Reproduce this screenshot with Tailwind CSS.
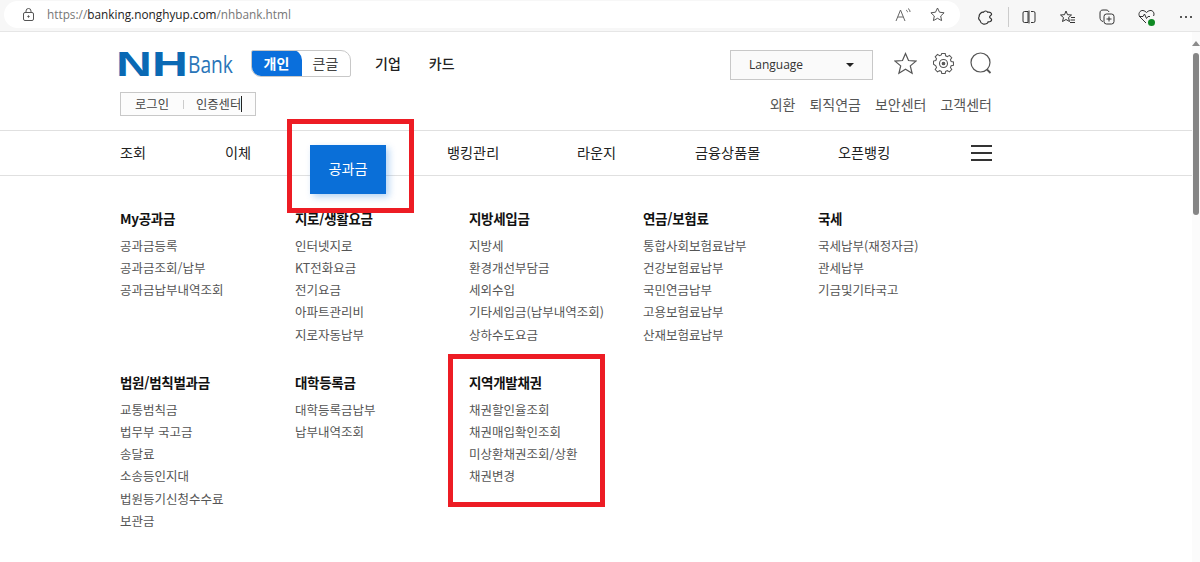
<!DOCTYPE html>
<html lang="ko"><head><meta charset="utf-8"><script src="https://cdn.jsdelivr.net/npm/@tailwindcss/browser@4"></script></head>
<body class="relative h-[562px] w-[1200px] overflow-hidden bg-white font-['Noto_Sans_CJK_KR','Noto_Sans',sans-serif] text-[#333]">
<!-- browser bar -->
<div class="flex h-[32px] items-start border-b border-[#e6e6e6] bg-[#f7f7f7] pl-[4px]">
  <div class="mt-[1px] flex h-[27px] w-[956px] shrink-0 items-center rounded-full bg-white pl-[18px] pr-[15px]">
    <svg class="h-[13px] w-[13px]" viewBox="0 0 13 13" fill="none" stroke="#555" stroke-width="1"><rect x="1.5" y="4.5" width="10" height="8" rx="1.5"/><path d="M4 4.5V3a2.500 2.500 0 0 1 5 0v1.500"/><circle cx="6.500" cy="8.500" r=".7" fill="#555"/></svg>
    <div class="ml-[12px] font-['Open_Sans',sans-serif] text-[11.800px] text-[#777]">https://<span class="text-[#222]">banking.nonghyup.com</span>/nhbank.html</div>
    <div class="ml-auto flex items-center gap-[17px]">
      <svg class="h-[16px] w-[18px]" viewBox="0 0 18 16" fill="none" stroke="#666" stroke-width="1"><path d="M1 14 5.500 3 10 14M2.800 10h5.400M11 3c1 .6 1.500 1.300 1.500 2.200M13 1.500c1.400.9 2 2 2 3.500"/></svg>
      <svg class="h-[15px] w-[15px]" viewBox="0 0 15 15" fill="none" stroke="#555" stroke-width="1"><path d="M7.500 1l2 4.200 4.600.6-3.400 3.200.9 4.600-4.100-2.300-4.100 2.300.9-4.600L.9 5.800l4.600-.6z"/></svg>
    </div>
  </div>
  <div class="mt-[7px] ml-[18px] flex shrink-0 items-center">
    <svg class="h-[15px] w-[15px]" viewBox="0 0 15 15" fill="none" stroke="#333" stroke-width="1.200"><path d="M5.500 2.200C6.300.5 9 .7 9.700 2.300c1.800-.6 3.800.3 3.900 2 0 1.100-2 1.300-2 2.700 0 1.500 2.200 1.200 2 2.900-.1 1.500-2 2.100-3.500 1.900-.4 1.800-3 2.800-5 2.200C3.300 13.500 2.300 12 2 10.500.5 9.500.3 7.700 1.200 6.500.7 4.500 3.500 1.800 5.500 2.200z"/></svg>
    <div class="ml-[15px] h-[20px] w-px bg-[#ccc]"></div>
    <svg class="ml-[13px] h-[14px] w-[14px]" viewBox="0 0 14 14" fill="none" stroke="#333" stroke-width="1"><path d="M6 1.500H2.500a1.500 1.500 0 0 0-1.500 1.500v8a1.500 1.500 0 0 0 1.500 1.500H6zM7 .5v13M9 1.500h2.500A1.500 1.500 0 0 1 13 3v8a1.500 1.500 0 0 1-1.500 1.500H9"/></svg>
    <svg class="ml-[24px] h-[15px] w-[15px]" viewBox="0 0 15 15" fill="none" stroke="#333" stroke-width="1"><path d="M6 1l1.500 3.700 4 .3-3 2.600 1 3.900L6 9.500l-3.500 2 1-3.900-3-2.600 4-.3zM11 7.500h4M10.500 10h4.500M10 12.500h5"/></svg>
    <svg class="ml-[24px] h-[16px] w-[16px]" viewBox="0 0 16 16" fill="none" stroke="#333" stroke-width="1"><path d="M4 12.500C1.500 12 1 10 1 8V4c0-2 1-3 3-3h3c1.500 0 2.500.7 3 2"/><rect x="5" y="5" width="10" height="10" rx="2.500"/><path d="M10 7.500v5M7.500 10h5"/></svg>
    <div class="relative ml-[23px] h-[16px] w-[17px]">
      <svg class="h-[16px] w-[17px]" viewBox="0 0 17 16" fill="none" stroke="#333" stroke-width="1"><path d="M8 14 2 8C-.500 5 2 1 5 1.500 6.500 1.700 7.500 2.500 8.500 3.500 9.500 2.500 10.500 1.700 12 1.500c3-.5 5 3 3.500 5.500M1 7.500h4l1.500-2.500 2 4.500 1.500-2h2"/></svg>
      <span class="absolute right-0 bottom-[-1px] h-[7px] w-[7px] rounded-full bg-[#0f8a23]"></span>
    </div>
    <div class="ml-[25px] flex gap-[3px]"><i class="h-[2px] w-[2px] rounded-full bg-[#222]"></i><i class="h-[2px] w-[2px] rounded-full bg-[#222]"></i><i class="h-[2px] w-[2px] rounded-full bg-[#222]"></i></div>
  </div>
</div>
<!-- scrollbar -->
<div class="absolute top-[32px] right-0 bottom-0 w-[8px] bg-[#fbfbfb]">
  <div class="mx-auto mt-[9px] h-0 w-0 border-x-[4px] border-b-[5px] border-x-transparent border-b-[#8a8a8a]"></div>
  <div class="mx-auto mt-[7px] h-[162px] w-[6px] rounded-[3px] bg-[#858585]"></div>
</div>
<div class="w-[1192px]">
<!-- header -->
<header class="h-[98px] pr-[200px] pl-[120px] pt-[17px]">
  <div class="flex h-[29px] items-center">
    <div class="flex w-[113px] shrink-0 items-center">
      <div class="-ml-[4px] w-[72px] shrink-0 origin-left scale-x-[1.42] font-['Liberation_Sans',sans-serif] text-[35px] leading-none font-bold text-[#0a69b4]">NH</div>
      <div class="shrink-0 origin-left scale-x-[.8] font-['Open_Sans',sans-serif] text-[24px] leading-none text-[#2a75b8]">Bank</div>
    </div>
    <div class="ml-[18px] flex h-[27px] w-[100px] shrink-0 overflow-hidden rounded-tl-[2px] rounded-tr-[10px] rounded-br-[2px] rounded-bl-[10px] border border-[#c8c8c8] text-[14px]">
      <div class="-m-px flex w-[51px] items-center justify-center rounded-tr-[10px] rounded-bl-[10px] bg-[#0a6fdc] font-bold text-white">개인</div>
      <div class="flex flex-1 items-center justify-center text-[#444]">큰글</div>
    </div>
    <div class="ml-[24px] text-[14px] font-medium text-[#222]">기업</div>
    <div class="ml-[28px] text-[14px] font-medium text-[#222]">카드</div>
    <div class="mt-[2px] ml-auto flex h-[30px] w-[143px] items-center justify-between border border-[#c8c8c8] bg-[#fafafa] pr-[18px] pl-[18px] font-['Open_Sans',sans-serif] text-[12px] text-[#333]">Language<span class="h-0 w-0 border-x-[4px] border-t-[4px] border-x-transparent border-t-[#222]"></span></div>
    <div class="ml-[21px] flex items-center gap-[16px]">
      <svg class="h-[23px] w-[23px]" viewBox="0 0 23 23" fill="none" stroke="#555" stroke-width="1.200"><path d="M11.500 1.500l3 7 7.500.6-5.700 4.800 1.800 7.400-6.600-4-6.600 4 1.800-7.400L1 9.100l7.500-.6z"/></svg>
      <svg class="h-[21px] w-[21px]" viewBox="0 0 21 21" fill="none" stroke="#555" stroke-width="1.100"><path d="M8.700 1h3.600l.5 2.500 1.800.8 2.200-1.300 2.400 2.500-1.400 2.100.8 1.800 2.400.6v3.400l-2.400.6-.8 1.800 1.400 2.100-2.400 2.500-2.200-1.300-1.800.7-.5 2.200H8.700l-.5-2.200-1.800-.7-2.200 1.300-2.400-2.500 1.400-2.100-.8-1.800L0 12.400V9l2.400-.6.800-1.800L1.800 4.500 4.200 2l2.200 1.300 1.800-.8z" transform="translate(.5 -.5) scale(.95)"/><circle cx="10.500" cy="10.500" r="4"/><circle cx="10.500" cy="10.500" r="1.300" fill="#555"/></svg>
      <svg class="h-[23px] w-[22px]" viewBox="0 0 22 23" fill="none" stroke="#555" stroke-width="1.200"><circle cx="10.500" cy="10.500" r="9.500"/><path d="M17 17.500l3.500 3.500" stroke-width="1.800"/></svg>
    </div>
  </div>
  <div class="mt-[14px] flex items-center">
    <div class="flex h-[24px] w-[136px] items-center border border-[#c8c8c8] bg-[#fcfcfc] pl-[14px] text-[12.300px] text-[#444]">
      <span>로그인</span><span class="ml-[14px] h-[9px] w-px bg-[#ccc]"></span><span class="ml-[12px]">인증센터</span><span class="h-[16px] w-px bg-[#222]"></span>
    </div>
    <div class="ml-auto flex gap-[14px] text-[14px] text-[#555]"><span>외환</span><span>퇴직연금</span><span>보안센터</span><span>고객센터</span></div>
  </div>
</header>
<!-- nav -->
<nav class="relative flex h-[46px] items-center border-y border-[#e0e0e0] px-[120px] text-[14.200px] text-[#222]">
  <span class="w-[105px]">조회</span>
  <span class="w-[85px]">이체</span>
  <span class="flex h-[49px] w-[76px] translate-y-[16px] items-center justify-center bg-[#0a6fd8] text-white shadow-[3px_3px_7px_rgba(10,111,220,.3)]">공과금</span>
  <span class="ml-[61px] w-[130px]">뱅킹관리</span>
  <span class="w-[118px]">라운지</span>
  <span class="w-[143px]">금융상품몰</span>
  <span class="w-[133px]">오픈뱅킹</span>
  <span class="flex w-[21px] flex-col gap-[5px]"><i class="h-[2px] bg-[#333]"></i><i class="h-[2px] bg-[#333]"></i><i class="h-[2px] bg-[#333]"></i></span>
</nav>
<!-- menu -->
<main class="grid grid-cols-[175px_174px_174px_175px_175px] gap-y-[25.200px] px-[120px] pt-[31px]">
  <section><h3 class="text-[13.500px] leading-[22px] font-bold tracking-[-.3px] text-[#111]">My공과금</h3><ul class="mt-[5.800px] text-[12.500px] leading-[22.200px] text-[#555]"><li>공과금등록</li><li>공과금조회/납부</li><li>공과금납부내역조회</li></ul></section>
  <section><h3 class="text-[13.500px] leading-[22px] font-bold tracking-[-.3px] text-[#111]">지로/생활요금</h3><ul class="mt-[5.800px] text-[12.500px] leading-[22.200px] text-[#555]"><li>인터넷지로</li><li>KT전화요금</li><li>전기요금</li><li>아파트관리비</li><li>지로자동납부</li></ul></section>
  <section><h3 class="text-[13.500px] leading-[22px] font-bold tracking-[-.3px] text-[#111]">지방세입금</h3><ul class="mt-[5.800px] text-[12.500px] leading-[22.200px] text-[#555]"><li>지방세</li><li>환경개선부담금</li><li>세외수입</li><li>기타세입금(납부내역조회)</li><li>상하수도요금</li></ul></section>
  <section><h3 class="text-[13.500px] leading-[22px] font-bold tracking-[-.3px] text-[#111]">연금/보험료</h3><ul class="mt-[5.800px] text-[12.500px] leading-[22.200px] text-[#555]"><li>통합사회보험료납부</li><li>건강보험료납부</li><li>국민연금납부</li><li>고용보험료납부</li><li>산재보험료납부</li></ul></section>
  <section><h3 class="text-[13.500px] leading-[22px] font-bold tracking-[-.3px] text-[#111]">국세</h3><ul class="mt-[5.800px] text-[12.500px] leading-[22.200px] text-[#555]"><li>국세납부(재정자금)</li><li>관세납부</li><li>기금및기타국고</li></ul></section>
  <section><h3 class="text-[13.500px] leading-[22px] font-bold tracking-[-.3px] text-[#111]">법원/범칙벌과금</h3><ul class="mt-[5.800px] text-[12.500px] leading-[22.200px] text-[#555]"><li>교통범칙금</li><li>법무부 국고금</li><li>송달료</li><li>소송등인지대</li><li>법원등기신청수수료</li><li>보관금</li></ul></section>
  <section><h3 class="text-[13.500px] leading-[22px] font-bold tracking-[-.3px] text-[#111]">대학등록금</h3><ul class="mt-[5.800px] text-[12.500px] leading-[22.200px] text-[#555]"><li>대학등록금납부</li><li>납부내역조회</li></ul></section>
  <section><h3 class="text-[13.500px] leading-[22px] font-bold tracking-[-.3px] text-[#111]">지역개발채권</h3><ul class="mt-[5.800px] text-[12.500px] leading-[22.200px] text-[#555]"><li>채권할인율조회</li><li>채권매입확인조회</li><li>미상환채권조회/상환</li><li>채권변경</li></ul></section>
</main>
</div>
<!-- red annotations -->
<div class="pointer-events-none absolute top-[119px] left-[287px] h-[94px] w-[127px] border-[5px] border-[#ed1c24]"></div>
<div class="pointer-events-none absolute top-[354px] left-[448px] h-[153px] w-[157px] border-[5px] border-[#ed1c24]"></div>
</body></html>
